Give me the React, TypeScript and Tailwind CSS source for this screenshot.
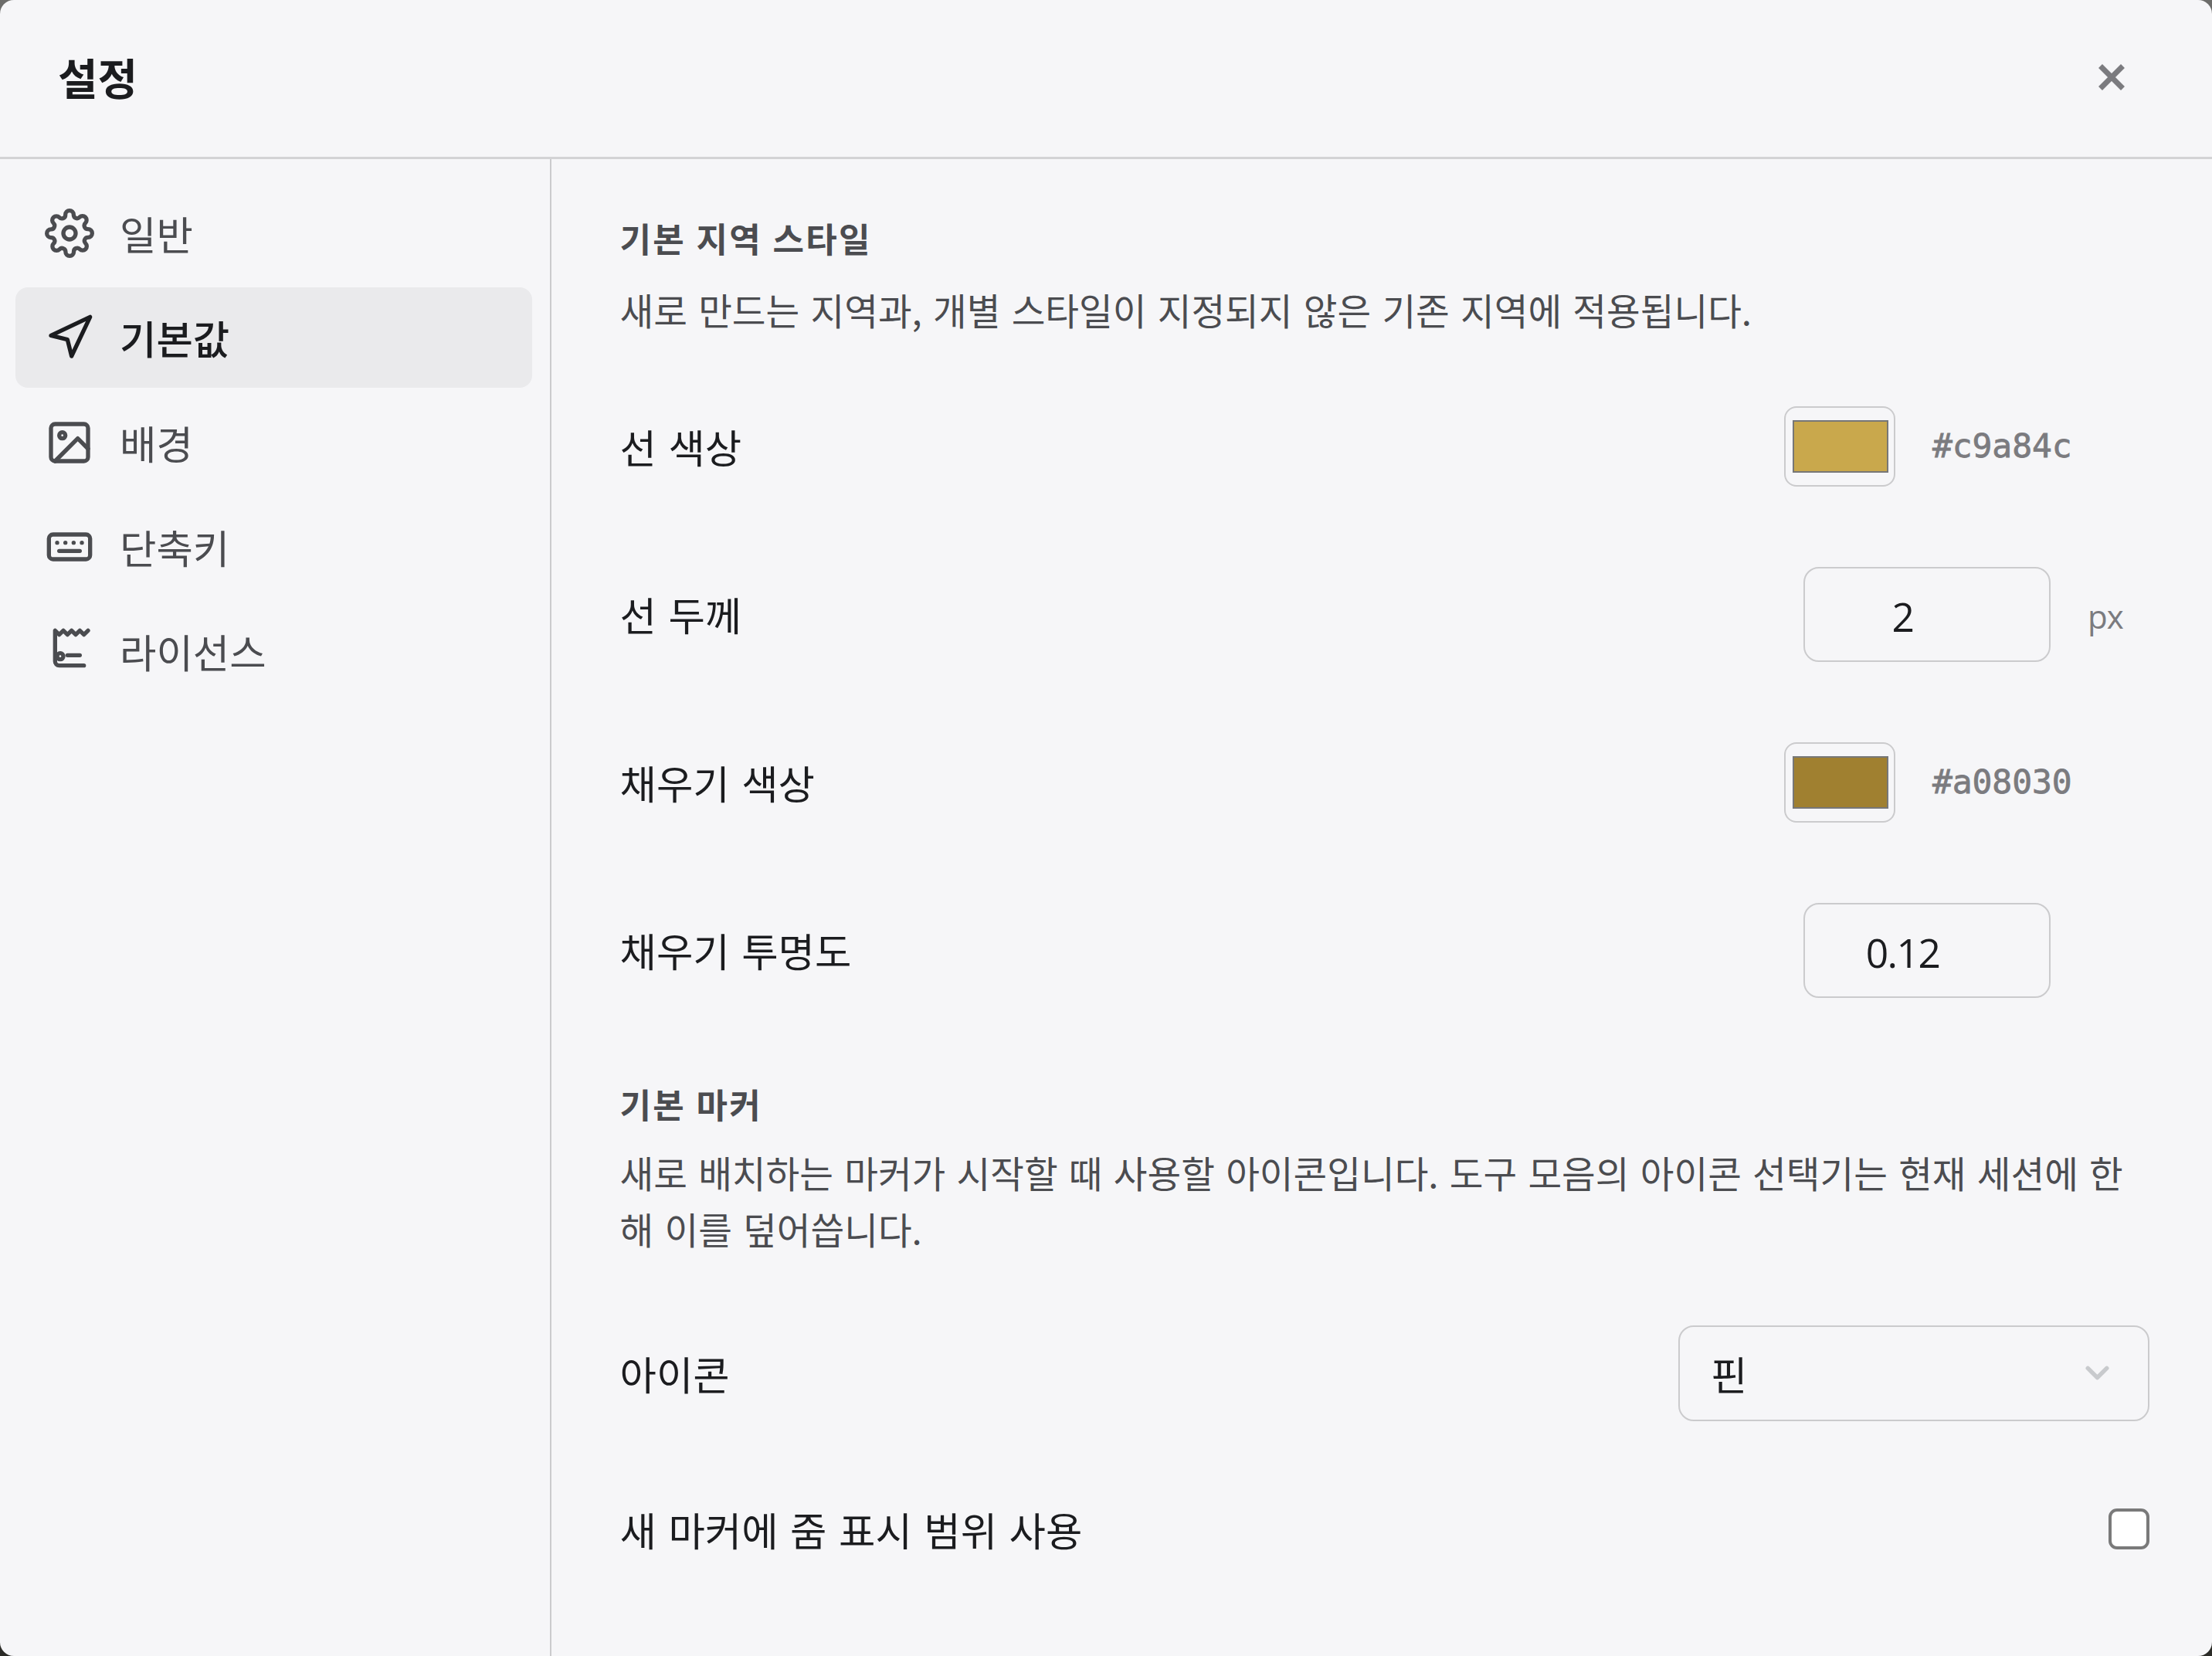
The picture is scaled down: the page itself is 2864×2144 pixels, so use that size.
import React from 'react'
import { FiChevronDown, FiImage, FiNavigation, FiSettings } from 'react-icons/fi'

const KeyboardIcon = ({ className }: { className?: string }) => (
  <svg className={className} viewBox="0 0 24 24" fill="none" stroke="currentColor" strokeWidth="2" strokeLinecap="round" strokeLinejoin="round">
    <rect x="2" y="6" width="20" height="12" rx="2" />
    <path d="M6 10h.01M10 10h.01M14 10h.01M18 10h.01M7 14h10" />
  </svg>
)

const LicenseIcon = ({ className }: { className?: string }) => (
  <svg className={className} viewBox="0 0 24 24" fill="none" stroke="currentColor" strokeWidth="2" strokeLinecap="round" strokeLinejoin="round">
    <path d="M21 2l-2 2-2-2-2 2-2-2-2 2-2-2-2 2-2-2v15a2 2 0 0 0 2 2h12" />
    <path d="M11 14h6" />
    <circle cx="7.5" cy="14.5" r="1.5" />
  </svg>
)

const tabs = [
  { id: 'general', label: '일반', icon: FiSettings },
  { id: 'defaults', label: '기본값', icon: FiNavigation },
  { id: 'background', label: '배경', icon: FiImage },
  { id: 'shortcuts', label: '단축키', icon: KeyboardIcon },
  { id: 'license', label: '라이선스', icon: LicenseIcon },
]

const Row = ({ label, className, children }: { label: string; className: string; children: React.ReactNode }) => (
  <div className={`flex items-center justify-between ${className}`}>
    <span className="text-[51.5px] leading-[70px] [word-spacing:4px] text-[#1b1c1f]">{label}</span>
    {children}
  </div>
)

const ColorField = ({ value }: { value: string }) => (
  <div className="flex items-center gap-12">
    <div className="w-36 h-[104px] rounded-2xl border-2 border-[#cbcbcd] pl-[9px] pr-[7px] py-4">
      <div className="w-full h-full border-2 border-[#777777]" style={{ backgroundColor: value }} />
    </div>
    <span className="w-[281px] font-['DejaVu_Sans_Mono',monospace] text-[43px] leading-none tracking-[-0.1px] text-[#7b7b7f] [-webkit-text-stroke:0.8px]">
      {value}
    </span>
  </div>
)

const NumberField = ({ value, unit }: { value: string; unit?: string }) => (
  <div className="flex items-center gap-12 font-['Open_Sans',sans-serif]">
    <div className="w-80 h-[123px] flex items-center justify-center rounded-[20px] border-2 border-[#cbcbcd] pr-[63px] pt-1.5 text-[51.5px] leading-none tracking-[-1.6px] text-[#1b1c1f]">
      {value}
    </div>
    <span className="w-20 pt-1.5 text-[42px] leading-none tracking-[-1px] text-[#7b7b7f]">{unit}</span>
  </div>
)

const SectionTitle = ({ children }: { children: React.ReactNode }) => (
  <h2 className="text-[44px] leading-[60px] font-bold tracking-[0.05em] [word-spacing:1.5px] text-[#4b4c50]">{children}</h2>
)

const SectionText = ({ children }: { children: React.ReactNode }) => (
  <p className="text-[47.5px] leading-[73px] [word-spacing:3.6px] text-[#4b4c50]">{children}</p>
)

const App = () => {
  const activeTab = 'defaults'

  return (
    <div className="w-[2864px] h-[2144px] bg-linear-to-b from-[#6c6c6a] to-[#2c2c28]">
      <div className="w-full h-full flex flex-col overflow-hidden rounded-[18px] bg-[#f6f6f8] font-['Noto_Sans_CJK_KR',sans-serif]">
        <header className="h-[206px] shrink-0 flex items-center justify-between border-b-[3px] border-[#d3d3d5] pl-[75px] pr-[113px]">
          <h1 className="text-[56px] leading-[80px] pb-1.5 font-bold text-[#1b1c1f]">설정</h1>
          <svg className="w-[34px] h-[34px] mb-1" viewBox="0 0 34 34" fill="none" stroke="#7b7b7f" strokeWidth="7">
            <path d="M2.5 2.5l29 29M31.5 2.5l-29 29" />
          </svg>
        </header>

        <div className="flex flex-1">
          <nav className="w-[714px] shrink-0 flex flex-col gap-[5.3px] border-r-2 border-[#cbcbcd] pt-[31px] pl-5 pr-[23px]">
            {tabs.map(({ id, label, icon: Icon }) => (
              <button
                key={id}
                className={`h-[130px] flex items-center gap-[33px] rounded-2xl pl-[38px] text-[51.5px] leading-[70px] ${
                  id === activeTab ? 'bg-[#eaeaec] font-medium text-[#1b1c1f]' : 'text-[#4b4c50]'
                }`}
              >
                <Icon className="w-16 h-16" />
                <span>{label}</span>
              </button>
            ))}
          </nav>

          <main className="flex-1 pt-[72px] pl-[88.5px] pr-[81px]">
            <section>
              <SectionTitle>기본 지역 스타일</SectionTitle>
              <div className="mt-[26px] mb-8">
                <SectionText>새로 만드는 지역과, 개별 스타일이 지정되지 않은 기존 지역에 적용됩니다.</SectionText>
              </div>
              <Row label="선 색상" className="h-[217.5px]">
                <ColorField value="#c9a84c" />
              </Row>
              <Row label="선 두께" className="h-[217.5px]">
                <NumberField value="2" unit="px" />
              </Row>
              <Row label="채우기 색상" className="h-[217.5px]">
                <ColorField value="#a08030" />
              </Row>
              <Row label="채우기 투명도" className="h-[217.5px]">
                <NumberField value="0.12" />
              </Row>
            </section>

            <section className="pt-[60px]">
              <SectionTitle>기본 마커</SectionTitle>
              <div className="mt-[22px] mb-[42px]">
                <SectionText>
                  새로 배치하는 마커가 시작할 때 사용할 아이콘입니다. 도구 모음의 아이콘 선택기는 현재 세션에 한해 이를 덮어씁니다.
                </SectionText>
              </div>
              <Row label="아이콘" className="h-[217px]">
                <div className="w-[610px] h-[124px] flex items-center justify-between rounded-[20px] border-2 border-[#cbcbcd] pl-10 pr-[41px]">
                  <span className="text-[51.5px] leading-[70px] text-[#1b1c1f]">핀</span>
                  <FiChevronDown className="w-[49px] h-[49px] text-[#c8cacd]" strokeWidth={2.7} />
                </div>
              </Row>
              <Row label="새 마커에 줌 표시 범위 사용" className="h-[187px]">
                <div className="w-[53px] h-[53px] rounded-[11px] border-4 border-[#7a7a7a] bg-white" />
              </Row>
            </section>
          </main>
        </div>
      </div>
    </div>
  )
}

export default App
